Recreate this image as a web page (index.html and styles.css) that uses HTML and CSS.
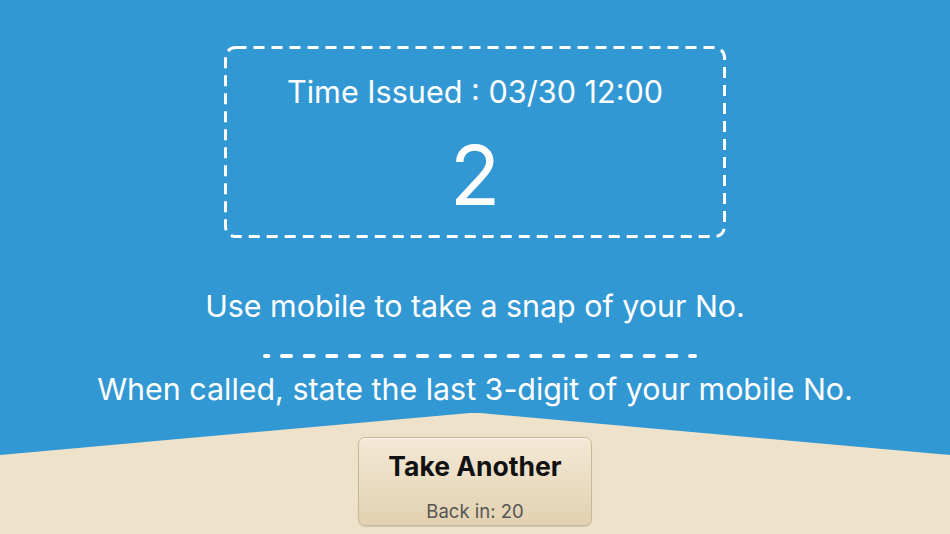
FILE: index.html
```html
<!DOCTYPE html>
<html>
<head>
<meta charset="utf-8">
<link rel="stylesheet" href="styles.css">
</head>
<body>
<svg class="ground" width="950" height="534" viewBox="0 0 950 534" aria-hidden="true">
  <polygon points="0,455 470,413 480,413 950,455 950,534 0,534" fill="#efe2cb"/>
</svg>
<main class="screen">
  <section class="ticket">
    <svg class="ticket-border" width="502" height="192" viewBox="0 0 502 192" aria-hidden="true">
      <rect x="1.5" y="1.5" width="499" height="189" rx="10" ry="10" fill="none" stroke="#fff" stroke-width="3" stroke-dasharray="11 7"/>
    </svg>
    <div class="issued">Time Issued : 03/30 12:00</div>
    <div class="number">2</div>
  </section>
  <p class="hint">Use mobile to take a snap of your No.</p>
  <svg class="divider" width="450" height="8" viewBox="0 0 450 8" aria-hidden="true">
    <line x1="15" y1="4" x2="445" y2="4" stroke="#fff" stroke-width="4" stroke-linecap="round" stroke-dasharray="9 13.67" stroke-dashoffset="5.67"/>
  </svg>
  <p class="hint hint-wide">When called, state the last 3-digit of your mobile No.</p>
  <button class="take">
    <span class="take-title">Take Another</span>
    <span class="take-sub">Back in: 20</span>
  </button>
</main>
</body>
</html>
```
FILE: styles.css
```css
html, body {
  margin: 0;
  padding: 0;
}
body {
  width: 950px;
  height: 534px;
  overflow: hidden;
  background: #3198d3;
  position: relative;
  font-family: Inter, Roboto, "Liberation Sans", sans-serif;
  color: #fff;
}
.ground {
  position: absolute;
  left: 0;
  top: 0;
}
.screen {
  position: relative;
  display: flex;
  flex-direction: column;
  align-items: center;
  padding-top: 46px;
}
.ticket {
  position: relative;
  width: 502px;
  height: 192px;
  box-sizing: border-box;
  padding-top: 26px;
  display: flex;
  flex-direction: column;
  align-items: center;
}
.ticket-border {
  position: absolute;
  left: 0;
  top: 0;
}
.issued {
  font-size: 30.6px;
  line-height: 40px;
}
.number {
  font-size: 83px;
  line-height: 84px;
  margin-top: 21px;
}
.hint {
  margin: 0;
  font-size: 30.4px;
  line-height: 40px;
}
.hint:first-of-type {
  margin-top: 48px;
}
.divider {
  display: block;
  margin-top: 26px;
}
.hint-wide {
  margin-top: 9px;
}
.take {
  margin-top: 28px;
  width: 234px;
  height: 89px;
  border: 1.5px solid #c6b797;
  border-radius: 7px;
  background: linear-gradient(#f3e9d6, #e2d1b1);
  box-shadow: inset 0 1px 0 rgba(255,255,255,0.6), 0 1px 1px rgba(0,0,0,0.12);
  display: flex;
  flex-direction: column;
  align-items: center;
  padding: 0;
  font-family: Inter, Roboto, "Liberation Sans", sans-serif;
}
.take-title {
  margin-top: 12px;
  font-size: 26.5px;
  font-weight: 650;
  line-height: 32px;
  color: #111;
}
.take-sub {
  margin-top: 18px;
  font-size: 18.5px;
  line-height: 22px;
  color: #555;
}
```
